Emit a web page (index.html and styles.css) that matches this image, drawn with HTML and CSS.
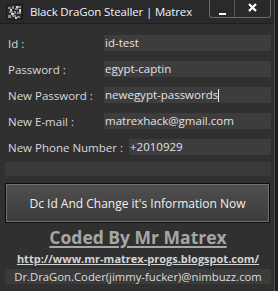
FILE: index.html
```html
<!DOCTYPE html>
<html>
<head>
<meta charset="utf-8">
<link rel="stylesheet" href="styles.css">
</head>
<body>
<div class="window">
  <div class="titlebar">
    <svg class="appicon" width="17" height="16" viewBox="0 0 17 16">
      <rect width="17" height="16" fill="#1a1a1a"/>
      <rect x="1" y="1" width="15" height="14" fill="#2a2a2a"/>
      <path d="M2 3h3v2H2zM6 2h2v3H6zM9 4h3v2H9zM12 2h3v2h-3zM3 7h4v2H3zM8 7h2v3H8zM11 8h4v2h-4zM2 11h3v3H2zM6 11h4v2H6zM11 12h3v2h-3z" fill="#8a8a8a"/>
      <path d="M4 5h2v2H4zM10 2h2v2h-2zM5 9h3v2H5zM13 5h2v3h-2zM9 13h2v2H9z" fill="#d0d0d0"/>
    </svg>
    <span class="title">Black DraGon Stealler | Matrex</span>
    <div class="ctrls">
      <div class="cbtn min"><span class="minbar"></span></div>
      <div class="cbtn close">
        <svg width="9" height="9" viewBox="0 0 9 9"><path d="M1 1L8 8M8 1L1 8" stroke="#fff" stroke-width="2.2"/></svg>
      </div>
    </div>
  </div>
  <div class="body">
    <div class="row"><span class="label">Id :</span><div class="field">id-test</div></div>
    <div class="row"><span class="label">Password :</span><div class="field">egypt-captin</div></div>
    <div class="row"><span class="label">New Password :</span><div class="field">newegypt-passwords<span class="caret"></span></div></div>
    <div class="row"><span class="label">New E-mail :</span><div class="field">matrexhack@gmail.com</div></div>
    <div class="row phone"><span class="label">New Phone Number :</span><div class="field">+2010929</div></div>
    <div class="emptybar"></div>
    <div class="btn"><div class="btn-inner">Dc Id And Change it's Information Now</div></div>
    <div class="coded">Coded By Mr Matrex</div>
    <div class="url">http://www.mr-matrex-progs.blogspot.com/</div>
    <div class="footer">Dr.DraGon.Coder(jimmy-fucker)@nimbuzz.com</div>
  </div>
</div>
</body>
</html>
```
FILE: styles.css
```css
html, body {
  margin: 0;
  padding: 0;
  background: #1c1c1c;
}
body {
  width: 278px;
  height: 291px;
  overflow: hidden;
  font-family: "Open Sans", "Noto Sans", sans-serif;
}
.window {
  width: 275px;
  height: 291px;
  background: #303030;
  border-right: 1px solid #4a4a4a;
  box-sizing: border-box;
}
.titlebar {
  height: 24px;
  background: #2a2a2a;
  border-bottom: 1px solid #1e1e1e;
  display: flex;
  align-items: center;
  position: relative;
  box-sizing: border-box;
}
.appicon {
  margin-left: 6px;
  margin-right: 7px;
}
.title {
  color: #eef4ff;
  font-size: 11.5px;
  letter-spacing: -0.15px;
}
.ctrls {
  position: absolute;
  left: 209px;
  top: 0;
  width: 62px;
  height: 18px;
  display: flex;
  border: 1px solid #6a6a6a;
  border-top: none;
  border-radius: 0 0 3px 3px;
  box-sizing: border-box;
}
.cbtn {
  display: flex;
  align-items: center;
  justify-content: center;
}
.min {
  width: 25px;
  border-right: 1px solid #5a5a5a;
  align-items: flex-end;
  padding-bottom: 2px;
  box-sizing: border-box;
}
.minbar {
  width: 7px;
  height: 2px;
  background: #fff;
}
.close {
  flex: 1;
  padding-bottom: 3px;
}
.body {
  padding: 11px 3px 0 5px;
  display: flex;
  flex-direction: column;
}
.row {
  display: flex;
  align-items: center;
  height: 16px;
  margin-bottom: 10px;
}
.label {
  width: 96px;
  padding-left: 3px;
  color: #d8d8d8;
  font-size: 11.5px;
  white-space: nowrap;
}
.phone .label {
  width: 121px;
}
.field {
  flex: 1;
  height: 16px;
  background: #3d3d3d;
  color: #e2e2e2;
  font-size: 11.5px;
  line-height: 16px;
  padding-left: 1px;
  display: flex;
  align-items: center;
}
.caret {
  width: 1px;
  height: 13px;
  background: #e8e8e8;
}
.phone {
  margin-bottom: 7px;
}
.emptybar {
  height: 14px;
  background: #3a3a3a;
  margin-bottom: 7px;
}
.btn {
  height: 40px;
  border: 1px solid #0c0c0c;
  box-sizing: border-box;
  margin-right: 1px;
}
.btn-inner {
  height: 100%;
  box-sizing: border-box;
  border: 1px solid #6e6e6e;
  background: linear-gradient(#4e4e4e, #3c3c3c);
  color: #f0f0f0;
  font-size: 12px;
  display: flex;
  align-items: center;
  justify-content: center;
}
.coded {
  margin-top: 3px;
  text-align: center;
  color: #a6a6a6;
  font-weight: bold;
  font-size: 17.5px;
  line-height: 22px;
  text-decoration: underline;
  text-decoration-thickness: 2px;
  text-underline-offset: 2px;
}
.url {
  margin-top: 4px;
  text-align: center;
  color: #d4d4d4;
  font-weight: bold;
  font-size: 11px;
  line-height: 14px;
  text-decoration: underline;
  text-underline-offset: 1px;
}
.footer {
  margin-top: 3px;
  height: 15px;
  background: #3b3b3b;
  color: #dcdcdc;
  font-size: 11.3px;
  line-height: 15px;
  text-align: center;
}
```
